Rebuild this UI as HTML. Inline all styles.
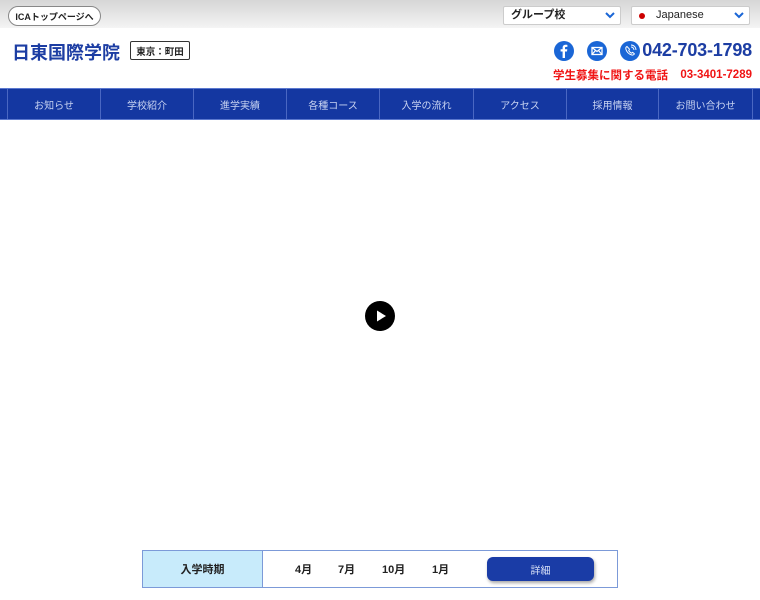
<!DOCTYPE html>
<html><head><meta charset="utf-8"><style>
*{margin:0;padding:0;box-sizing:border-box}
body{width:760px;height:600px;background:#fff;font-family:"Liberation Sans","Noto Sans CJK JP",sans-serif;position:relative;overflow:hidden;white-space:nowrap}
.top{position:absolute;left:0;top:0;width:760px;height:28px;background:linear-gradient(#d6d6d6,#f4f4f4)}
.pill{position:absolute;left:8px;top:6px;width:93px;height:20px;border:1px solid #888;border-radius:10px;background:#fff;font-size:9px;font-weight:bold;color:#222;display:flex;align-items:center;justify-content:center}
.sel{position:absolute;top:6px;height:19px;background:#fff;border:1px solid #ccc;border-radius:2px;font-size:11px;color:#222;line-height:17px}
.sel svg{position:absolute;right:5px;top:5px}
.logo{position:absolute;left:12px;top:39px;font-size:18px;font-weight:bold;color:#1c3da3}
.badge{position:absolute;left:130px;top:41px;width:60px;height:19px;border:1.5px solid #333;border-radius:2px;font-size:9.5px;font-weight:bold;color:#222;display:flex;align-items:center;justify-content:center}
.ic{position:absolute;top:41px;width:20px;height:20px;border-radius:50%;background:#1a66d6}
.tel{position:absolute;right:8px;top:40px;font-size:18px;font-weight:bold;color:#1c3da3;letter-spacing:-0.2px}
.red{position:absolute;top:67px;height:16px;font-size:11.5px;font-weight:bold;color:#f01414;display:flex;align-items:center}
.nav{position:absolute;left:0;top:88px;width:760px;height:32px;background:#1437a1;border-top:1px solid #5b78cf;border-bottom:1px solid #5b78cf}
.nav div{position:absolute;top:0;height:30px;border-left:1px solid #4a67c2;font-size:10px;color:#c9d4f2;display:flex;align-items:center;justify-content:center}
.play{position:absolute;left:365px;top:301px;width:30px;height:30px;border-radius:50%;background:#000}
.box{position:absolute;left:142px;top:550px;width:476px;height:38px;border:1px solid #7c9ad8;background:#fff}
.lab{position:absolute;left:0;top:0;width:120px;height:36px;background:#c8ebfb;border-right:1px solid #7c9ad8;font-size:11px;font-weight:bold;display:flex;align-items:center;justify-content:center;color:#222}
.m{position:absolute;top:0;height:36px;display:flex;align-items:center;font-size:11px;font-weight:bold;color:#222}
.btn{position:absolute;left:344px;top:6px;width:107px;height:24px;background:#1a3ca6;border-radius:6px;color:#d8e0f6;font-size:10px;display:flex;align-items:center;justify-content:center;box-shadow:1px 2px 3px rgba(0,0,0,.35)}
</style></head><body>
<div class="top"></div>
<div class="pill">ICAトップページへ</div>
<div class="sel" style="left:503px;width:118px;padding-left:7px;font-weight:bold">グループ校<svg width="10" height="7"><path d="M1 1L5 5L9 1" stroke="#1a66d6" stroke-width="2" fill="none"/></svg></div>
<div class="sel" style="left:631px;width:119px;padding-left:24px"><span style="position:absolute;left:7px;top:6px;width:6px;height:6px;border-radius:50%;background:#c00"></span>Japanese<svg width="10" height="7"><path d="M1 1L5 5L9 1" stroke="#1a66d6" stroke-width="2" fill="none"/></svg></div>
<div class="logo">日東国際学院</div>
<div class="badge">東京：町田</div>
<div class="ic" style="left:554px"><svg width="20" height="20"><path d="M11 17V10.5H13L13.3 8.3H11V7c0-.7.2-1.1 1.1-1.1h1.3V3.9c-.3 0-1-.1-1.8-.1-1.8 0-3 1.1-3 3.1v1.4H6.6v2.2h2v6.5z" fill="#fff"/></svg></div>
<div class="ic" style="left:587px"><svg width="20" height="20"><rect x="5" y="6.5" width="10" height="7" fill="none" stroke="#fff" stroke-width="1.3"/><path d="M5 6.5L10 10.5L15 6.5M5 13.5L8.5 9.5M15 13.5L11.5 9.5" stroke="#fff" stroke-width="1.2" fill="none"/></svg></div>
<div class="ic" style="left:620px"><svg width="20" height="20"><path d="M7 5.5c-1 .5-1.5 1.5-1 3 .8 2.4 3 4.6 5.4 5.4 1.5.5 2.5 0 3-1l-1.7-1.5-1.3.8c-1-.5-2.2-1.7-2.7-2.7l.8-1.3z" fill="none" stroke="#fff" stroke-width="1"/><path d="M11 6a3 3 0 013 3M11 4a5 5 0 015 5" stroke="#fff" stroke-width=".9" fill="none"/></svg></div>
<div class="tel">042-703-1798</div>
<div class="red" style="right:92px">学生募集に関する電話</div>
<div class="red" style="right:8px">03-3401-7289</div>
<div class="nav">
<div style="left:7px;width:93px">お知らせ</div>
<div style="left:100px;width:93px">学校紹介</div>
<div style="left:193px;width:93px">進学実績</div>
<div style="left:286px;width:93px">各種コース</div>
<div style="left:379px;width:94px">入学の流れ</div>
<div style="left:473px;width:93px">アクセス</div>
<div style="left:566px;width:92px">採用情報</div>
<div style="left:658px;width:94px">お問い合わせ</div>
<div style="left:752px;width:8px"></div>
</div>
<div class="play"><svg width="30" height="30"><path d="M12 9.5L21 15L12 20.5z" fill="#fff"/></svg></div>
<div class="box">
<div class="lab">入学時期</div>
<div class="m" style="left:152px">4月</div>
<div class="m" style="left:195px">7月</div>
<div class="m" style="left:239px">10月</div>
<div class="m" style="left:289px">1月</div>
<div class="btn">詳細</div>
</div>
</body></html>
